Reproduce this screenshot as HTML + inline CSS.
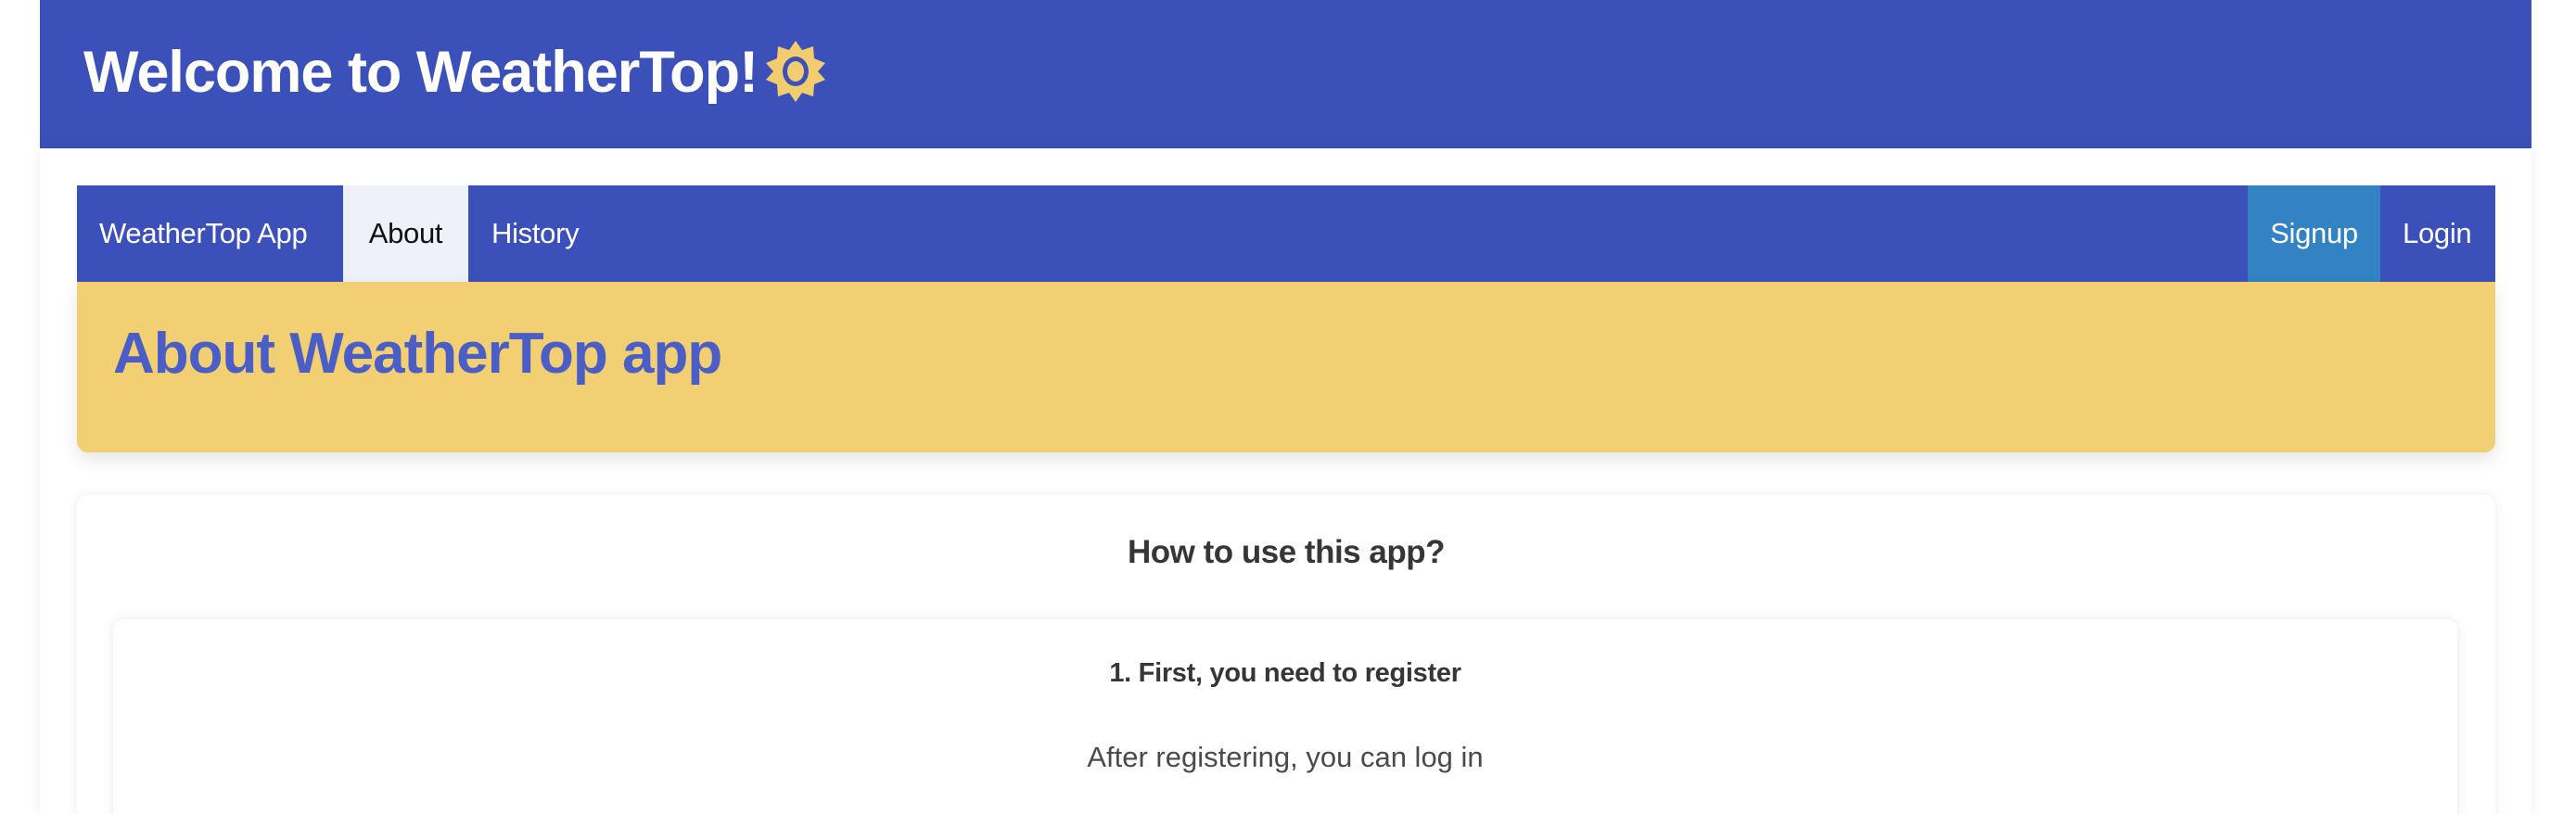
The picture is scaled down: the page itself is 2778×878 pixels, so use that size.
<!DOCTYPE html>
<html><head><meta charset="utf-8"><style>
*{box-sizing:border-box;margin:0;padding:0}
html,body{width:2778px;height:878px;overflow:hidden}
body{background:#fff;font-family:"Liberation Sans",sans-serif;position:relative}
.hdr{position:absolute;left:43px;top:0;width:2687px;height:160px;background:#3b51b9}
.hdr h1{position:absolute;left:47px;top:38px;color:#fff;font-size:63px;font-weight:bold;letter-spacing:-1px;white-space:nowrap;line-height:80px}
.sun{position:absolute;left:783px;top:44px}
.wrap{position:absolute;left:43px;top:160px;width:2687px;height:718px;background:#fff;box-shadow:0 0 14px rgba(0,0,0,.08)}
.nav{position:absolute;left:83px;top:200px;width:2608px;height:104px;background:#3b51b9}
.nav a{position:absolute;top:0;height:104px;line-height:104px;color:#fff;font-size:31px;text-decoration:none;white-space:nowrap;letter-spacing:-.3px}
.hero{position:absolute;left:83px;top:304px;width:2608px;height:184px;background:#f2cf73;border-radius:0 0 12px 12px;box-shadow:0 8px 18px rgba(0,0,0,.1)}
.hero h2{position:absolute;left:39px;top:42px;color:#4a5ec6;font-size:62px;font-weight:bold;letter-spacing:-1px;white-space:nowrap}
.card{position:absolute;left:83px;top:534px;width:2608px;height:360px;background:#fff;border-radius:12px;box-shadow:0 0 12px rgba(0,0,0,.08)}
.card h3{position:absolute;left:0;width:100%;top:42px;text-align:center;color:#363636;font-size:35px;font-weight:bold;letter-spacing:-.5px}
.inner{position:absolute;left:122px;top:668px;width:2528px;height:230px;background:#fff;border-radius:12px;box-shadow:0 0 12px rgba(0,0,0,.09)}
.inner h4{position:absolute;left:0;width:100%;top:42px;text-align:center;color:#363636;font-size:29px;font-weight:bold;letter-spacing:-.3px}
.inner p{position:absolute;left:0;width:100%;top:131px;text-align:center;color:#4a4a4a;font-size:31px}
</style></head><body>
<div class="hdr"><h1>Welcome to WeatherTop!</h1>
<svg class="sun" width="64" height="66" viewBox="0 0 64 66"><polygon fill="#f2cd6f" points="32,0 39,10 51,6 52,19 64,24 56,33 64,42 52,47 51,60 39,56 32,66 25,56 13,60 12,47 0,42 8,33 0,24 12,19 13,6 25,10"/><ellipse cx="32" cy="33" rx="14" ry="16" fill="#3b51b9"/><ellipse cx="32" cy="33" rx="9" ry="11" fill="#f2cd6f"/></svg>
</div>
<div class="wrap"></div>
<div class="nav">
<a style="left:24px">WeatherTop App</a>
<a style="left:287px;width:135px;background:#eef1f9;color:#111;text-align:center">About</a>
<a style="left:447px">History</a>
<a style="left:2341px;width:143px;background:#3282c4;text-align:center">Signup</a>
<a style="left:2508px">Login</a>
</div>
<div class="hero"><h2>About WeatherTop app</h2></div>
<div class="card"><h3>How to use this app?</h3></div>
<div class="inner"><h4>1. First, you need to register</h4><p>After registering, you can log in</p></div>
</body></html>
